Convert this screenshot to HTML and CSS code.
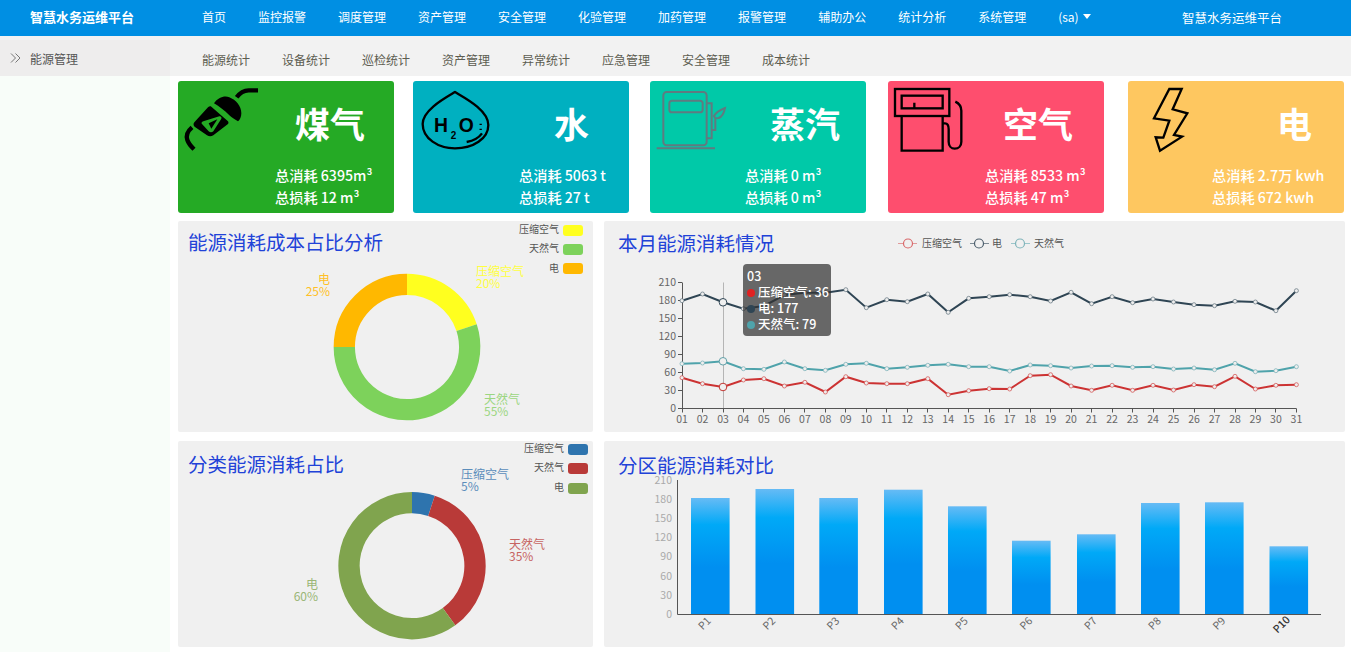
FILE: index.html
```html
<!DOCTYPE html>
<html lang="zh-CN">
<head>
<meta charset="utf-8">
<title>智慧水务运维平台</title>
<link rel="stylesheet" href="styles.css">
</head>
<body>
<header class="topbar">
  <div class="brand">智慧水务运维平台</div>
  <nav class="menu">
    <a>首页</a><a>监控报警</a><a>调度管理</a><a>资产管理</a><a>安全管理</a><a>化验管理</a><a>加药管理</a><a>报警管理</a><a>辅助办公</a><a>统计分析</a><a>系统管理</a><a class="user">(sa)<i class="caret"></i></a>
  </nav>
  <div class="brand-right">智慧水务运维平台</div>
</header>
<div class="layout">
  <aside class="sidebar">
    <div class="side-wrap">
      <div class="side-head">
        <svg class="chev" width="12" height="12" viewBox="0 0 12 12"><path d="M1 1.500l4.500 4.500L1 10.500M5.500 1.500L10 6l-4.500 4.500"/></svg>
        <span>能源管理</span>
      </div>
    </div>
  </aside>
  <main class="main">
    <nav class="subnav"><a>能源统计</a><a>设备统计</a><a>巡检统计</a><a>资产管理</a><a>异常统计</a><a>应急管理</a><a>安全管理</a><a>成本统计</a></nav>
    <section class="cards">
      <article class="card coal">
        <svg class="icon" viewBox="0 3 240 240">
          <path class="ink-line thick" d="M246 31H212C196 31 186 38 176 52"/>
          <path class="ink-fill" d="M108 70C120 52 140 46 154 52C174 60 190 78 190 100C190 110 186 120 180 124C170 118 160 112 154 106C140 92 124 80 108 70Z"/>
          <path class="ink-fill" fill-rule="evenodd" d="M100 80L150 124C152 127 152 131 149 133L106 166C100 170 93 170 87 166L52 142C46 138 45 132 49 127L90 82C93 79 97 78 100 80ZM72 132L92 154C96 158 102 158 106 154L130 116C132 112 128 108 124 109L76 124C71 126 69 129 72 132Z"/>
          <path class="ink-fill" d="M92 130L118 118L100 146Z"/>
          <path class="ink-line thick" d="M42 142C28 154 24 168 28 180C32 192 40 200 48 208"/>
        </svg>
        <h3>煤气</h3>
        <p>总消耗 6395m³</p>
        <p>总损耗 12 m³</p>
      </article>
      <article class="card water">
        <svg class="icon" viewBox="9 3 240 240">
          <path class="ink-line" d="M135 36C105 54 38 90 38 132C38 176 85 205 135 205C190 205 235 176 235 135C235 90 165 54 135 36Z"/>
          <text class="h2o" x="72" y="156">H</text>
          <text class="h2o small" x="122" y="176">2</text>
          <text class="h2o" x="146" y="156">O</text>
          <path class="ink-line" d="M170 186C190 182 206 174 216 160M212 131v4M212 146v4"/>
        </svg>
        <h3>水</h3>
        <p>总消耗 5063 t</p>
        <p>总损耗 27 t</p>
      </article>
      <article class="card steam">
        <svg class="icon" viewBox="720 3 240 240">
          <rect class="gray-line" x="760" y="36" width="130" height="160" rx="10"/>
          <rect class="gray-line" x="778" y="62" width="100" height="35" rx="8"/>
          <path class="gray-line" d="M740 205H915M890 70H905V175H890M905 150H916V115L912 108C918 96 930 90 945 84C942 100 936 110 926 114L916 115"/>
        </svg>
        <h3>蒸汽</h3>
        <p>总消耗 0 m³</p>
        <p>总损耗 0 m³</p>
      </article>
      <article class="card air">
        <svg class="icon" viewBox="24 3 240 240">
          <rect class="ink-line" x="45" y="27" width="163" height="81"/>
          <rect class="ink-line" x="65" y="47" width="123" height="38"/>
          <path class="ink-line" d="M103 68V85M65 108V212H188V108M188 130H195C204 130 206 138 206 148V185C206 198 214 206 224 206C236 206 244 198 244 185V92C244 80 236 70 226 65"/>
        </svg>
        <h3>空气</h3>
        <p>总消耗 8533 m³</p>
        <p>总损耗 47 m³</p>
      </article>
      <article class="card power">
        <svg class="icon" viewBox="744 3 240 240">
          <path class="ink-line" d="M868 27H905L878 88L922 100L882 165L906 170L840 212L827 172L850 173L868 122L822 115Z"/>
        </svg>
        <h3>电</h3>
        <p>总消耗 2.7万 kwh</p>
        <p>总损耗 672 kwh</p>
      </article>
    </section>

    <section class="panels">
      <article class="panel">
        <h2>能源消耗成本占比分析</h2>
        <svg class="chart" width="415" height="211" viewBox="0 0 415 211">
          <g class="donut">
            <path class="s-yellow" d="M229 63.300A62.700 62.700 0 0 1 288.630 106.620"/>
            <path class="s-green" d="M288.630 106.620A62.700 62.700 0 1 1 166.300 126"/>
            <path class="s-orange" d="M166.300 126A62.700 62.700 0 0 1 229 63.300"/>
          </g>
          <text class="pie-label t-yellow" x="298" y="55">压缩空气</text>
          <text class="pie-label t-yellow" x="298" y="67">20%</text>
          <text class="pie-label t-orange end" x="152" y="63">电</text>
          <text class="pie-label t-orange end" x="152" y="75">25%</text>
          <text class="pie-label t-green" x="306" y="183">天然气</text>
          <text class="pie-label t-green" x="306" y="195">55%</text>
          <text class="legend end" x="381" y="12">压缩空气</text>
          <rect class="f-yellow" x="385" y="4" width="20" height="11" rx="3"/>
          <text class="legend end" x="381" y="31">天然气</text>
          <rect class="f-green" x="385" y="23" width="20" height="11" rx="3"/>
          <text class="legend end" x="381" y="51">电</text>
          <rect class="f-orange" x="385" y="42" width="20" height="11" rx="3"/>
        </svg>
      </article>

      <article class="panel">
        <h2>本月能源消耗情况</h2>
        <svg class="chart" width="741" height="211" viewBox="0 0 741 211">
          <defs>
            <marker id="dot-air" markerWidth="6" markerHeight="6" refX="3" refY="3" markerUnits="userSpaceOnUse"><circle class="mk-air" cx="3" cy="3" r="2"/></marker>
            <marker id="dot-elec" markerWidth="6" markerHeight="6" refX="3" refY="3" markerUnits="userSpaceOnUse"><circle class="mk-elec" cx="3" cy="3" r="2"/></marker>
            <marker id="dot-gas" markerWidth="6" markerHeight="6" refX="3" refY="3" markerUnits="userSpaceOnUse"><circle class="mk-gas" cx="3" cy="3" r="2"/></marker>
          </defs>
          <path class="lg-air" d="M294 22.500H313"/><circle class="lc-air" cx="304" cy="22.500" r="4.500"/>
          <text class="legend" x="318" y="26">压缩空气</text>
          <path class="lg-elec" d="M366 22.500H385"/><circle class="lc-elec" cx="375" cy="22.500" r="4.500"/>
          <text class="legend" x="388" y="26">电</text>
          <path class="lg-gas" d="M407 22.500H426"/><circle class="lc-gas" cx="416" cy="22.500" r="4.500"/>
          <text class="legend" x="430" y="26">天然气</text>

          <path class="pointer" d="M119.500 61.500V187.500"/>
          <path class="axis" d="M78.500 61.500V187.500M74 61.500H78M74 79.500H78M74 97.500H78M74 115.500H78M74 133.500H78M74 151.500H78M74 169.500H78M74 187.500H692.400"/>
          <path class="axis" d="M78.500 187.500v4M98.500 187.500v4M119.500 187.500v4M139.500 187.500v4M159.500 187.500v4M180.500 187.500v4M200.500 187.500v4M221.500 187.500v4M241.500 187.500v4M262.500 187.500v4M282.500 187.500v4M303.500 187.500v4M323.500 187.500v4M344.500 187.500v4M364.500 187.500v4M385.500 187.500v4M405.500 187.500v4M426.500 187.500v4M446.500 187.500v4M467.500 187.500v4M487.500 187.500v4M508.500 187.500v4M528.500 187.500v4M549.500 187.500v4M569.500 187.500v4M590.500 187.500v4M610.500 187.500v4M631.500 187.500v4M651.500 187.500v4M671.500 187.500v4M692.500 187.500v4"/>
          <g class="tick end">
            <text x="72" y="65">210</text><text x="72" y="83">180</text><text x="72" y="101">150</text><text x="72" y="119">120</text><text x="72" y="137">90</text><text x="72" y="155">60</text><text x="72" y="173">30</text><text x="72" y="191">0</text>
          </g>
          <g class="tick mid">
            <text x="78" y="202">01</text><text x="98.500" y="202">02</text><text x="119" y="202">03</text><text x="139.400" y="202">04</text><text x="159.900" y="202">05</text><text x="180.400" y="202">06</text><text x="200.900" y="202">07</text><text x="221.400" y="202">08</text><text x="241.800" y="202">09</text><text x="262.300" y="202">10</text><text x="282.800" y="202">11</text><text x="303.300" y="202">12</text><text x="323.800" y="202">13</text><text x="344.200" y="202">14</text><text x="364.700" y="202">15</text><text x="385.200" y="202">16</text><text x="405.700" y="202">17</text><text x="426.200" y="202">18</text><text x="446.600" y="202">19</text><text x="467.100" y="202">20</text><text x="487.600" y="202">21</text><text x="508.100" y="202">22</text><text x="528.600" y="202">23</text><text x="549" y="202">24</text><text x="569.500" y="202">25</text><text x="590" y="202">26</text><text x="610.500" y="202">27</text><text x="631" y="202">28</text><text x="651.400" y="202">29</text><text x="671.900" y="202">30</text><text x="692.400" y="202">31</text>
          </g>
          <polyline class="line-elec" points="78,79.700 98.500,73 119,81.300 139.400,87.700 159.900,85 180.400,74 200.900,71.700 221.400,71.700 241.800,68.700 262.300,86.700 282.800,78.700 303.300,80.700 323.800,73 344.200,91.300 364.700,77.300 385.200,75.700 405.700,73.700 426.200,75.700 446.600,80 467.100,71.300 487.600,82.700 508.100,75.700 528.600,81.700 549,78 569.500,81 590,83.700 610.500,84.700 631,80.300 651.400,81 671.900,89.700 692.400,69.700"/>
          <polyline class="line-gas" points="78,142.700 98.500,142 119,140.300 139.400,147.700 159.900,148.300 180.400,141 200.900,147.700 221.400,149.300 241.800,143.300 262.300,142.300 282.800,147.700 303.300,146.300 323.800,144.300 344.200,143.300 364.700,145.700 385.200,145.700 405.700,150 426.200,144 446.600,144.700 467.100,147 487.600,145 508.100,144.700 528.600,146.300 549,145.700 569.500,148 590,147 610.500,148.700 631,142.300 651.400,150.700 671.900,149.700 692.400,145.700"/>
          <polyline class="line-air" points="78,156.700 98.500,162.700 119,166 139.400,159 159.900,157.700 180.400,165 200.900,161.300 221.400,171 241.800,155.700 262.300,162 282.800,162.700 303.300,162.700 323.800,157.700 344.200,173.700 364.700,169.700 385.200,167.700 405.700,168 426.200,154.700 446.600,153.700 467.100,165 487.600,169.300 508.100,164.300 528.600,169.300 549,164.300 569.500,169 590,163.700 610.500,165.700 631,155.300 651.400,168 671.900,164.300 692.400,163.700"/>
          <circle class="pt-elec" cx="119" cy="81.300" r="3.800"/>
          <circle class="pt-gas" cx="119" cy="140.300" r="3.800"/>
          <circle class="pt-air" cx="119" cy="166" r="3.800"/>
        </svg>
        <div class="tooltip">
          <div>03</div>
          <div><i class="dot d-air"></i>压缩空气: 36</div>
          <div><i class="dot d-elec"></i>电: 177</div>
          <div><i class="dot d-gas"></i>天然气: 79</div>
        </div>
      </article>

      <article class="panel">
        <h2>分类能源消耗占比</h2>
        <svg class="chart" width="415" height="206" viewBox="0 0 415 206">
          <g class="donut">
            <path class="s-blue" d="M234 61.700A63 63 0 0 1 253.470 64.780"/>
            <path class="s-red" d="M253.470 64.780A63 63 0 0 1 271.030 175.670"/>
            <path class="s-olive" d="M271.030 175.670A63 63 0 1 1 234 61.700"/>
          </g>
          <text class="pie-label t-blue" x="283" y="38">压缩空气</text>
          <text class="pie-label t-blue" x="283" y="50">5%</text>
          <text class="pie-label t-red" x="331" y="108">天然气</text>
          <text class="pie-label t-red" x="331" y="120">35%</text>
          <text class="pie-label t-olive end" x="140" y="148">电</text>
          <text class="pie-label t-olive end" x="140" y="160">60%</text>
          <text class="legend end" x="386" y="11">压缩空气</text>
          <rect class="f-blue" x="390" y="3" width="20" height="11" rx="3"/>
          <text class="legend end" x="386" y="30">天然气</text>
          <rect class="f-red" x="390" y="22" width="20" height="11" rx="3"/>
          <text class="legend end" x="386" y="50">电</text>
          <rect class="f-olive" x="390" y="42" width="20" height="11" rx="3"/>
        </svg>
      </article>

      <article class="panel">
        <h2>分区能源消耗对比</h2>
        <svg class="chart" width="741" height="206" viewBox="0 0 741 206">
          <defs>
            <linearGradient id="bar-fill" x1="0" y1="0" x2="0" y2="1">
              <stop offset="0" stop-color="#66bbf5"/>
              <stop offset="0.230" stop-color="#00a9f7"/>
              <stop offset="0.600" stop-color="#008ff0"/>
              <stop offset="1" stop-color="#008ff0"/>
            </linearGradient>
          </defs>
          <g class="bar">
            <rect x="87" y="57" width="38.600" height="116"/>
            <rect x="151.500" y="48" width="38.600" height="125"/>
            <rect x="215.300" y="57" width="38.600" height="116"/>
            <rect x="280" y="48.700" width="38.600" height="124.300"/>
            <rect x="344" y="65.300" width="38.600" height="107.700"/>
            <rect x="408" y="99.700" width="38.600" height="73.300"/>
            <rect x="473" y="93.300" width="38.600" height="79.700"/>
            <rect x="537" y="62" width="38.600" height="111"/>
            <rect x="601" y="61.300" width="38.600" height="111.700"/>
            <rect x="665.500" y="105.300" width="38.600" height="67.700"/>
          </g>
          <path class="axis" d="M73.500 39V173.500H717"/>
          <g class="tick-light end">
            <text x="68" y="43">210</text><text x="68" y="62">180</text><text x="68" y="81">150</text><text x="68" y="100">120</text><text x="68" y="119">90</text><text x="68" y="139">60</text><text x="68" y="158">30</text><text x="68" y="177">0</text>
          </g>
          <g class="tick mid">
            <text x="101" y="186" transform="rotate(-45 101 183)">P1</text>
            <text x="165.500" y="186" transform="rotate(-45 165.500 183)">P2</text>
            <text x="229.500" y="186" transform="rotate(-45 229.500 183)">P3</text>
            <text x="294" y="186" transform="rotate(-45 294 183)">P4</text>
            <text x="358" y="186" transform="rotate(-45 358 183)">P5</text>
            <text x="422.500" y="186" transform="rotate(-45 422.500 183)">P6</text>
            <text x="487" y="186" transform="rotate(-45 487 183)">P7</text>
            <text x="551" y="186" transform="rotate(-45 551 183)">P8</text>
            <text x="615.500" y="186" transform="rotate(-45 615.500 183)">P9</text>
            <text class="strong" x="678" y="187" transform="rotate(-45 678 184)">P10</text>
          </g>
        </svg>
      </article>
    </section>
  </main>
</div>
</body>
</html>
```
FILE: styles.css
```css
* { box-sizing: border-box; }
html, body { margin: 0; height: 100%; }
body {
  font-family: "Noto Sans CJK SC", "Noto Sans", sans-serif;
  background: #fff;
  overflow: hidden;
  color: #555;
}
a { text-decoration: none; color: inherit; }

/* top bar */
.topbar {
  display: flex;
  align-items: center;
  height: 36px;
  background: #008fe3;
  color: #fff;
  font-size: 12px;
}
.brand {
  width: 186px;
  padding: 0 0 3px 30px;
  font-size: 13px;
  font-weight: 700;
}
.menu { display: flex; padding-bottom: 3px; }
.menu a { padding: 0 16px; white-space: nowrap; }
.user { display: flex; align-items: center; }
.caret {
  width: 0;
  height: 0;
  margin-left: 4px;
  border-left: 4.500px solid transparent;
  border-right: 4.500px solid transparent;
  border-top: 5px solid #fff;
}
.brand-right {
  margin-left: auto;
  margin-right: 69px;
  padding-bottom: 2px;
  font-size: 12.500px;
}

/* frame */
.layout { display: flex; height: calc(100% - 36px); }
.sidebar {
  flex: 0 0 170px;
  background: #f8fdf9;
}
.side-wrap {
  padding-top: 4px;
  background: #f3f3f3;
}
.side-head {
  display: flex;
  align-items: center;
  height: 36px;
  padding-left: 10px;
  background: #eeeded;
  font-size: 12px;
  color: #555;
}
.chev { margin-right: 8px; margin-top: 0; }
.chev path { fill: none; stroke: #777; stroke-width: 1; }
.main { flex: 1; min-width: 0; padding-left: 1px; }
.subnav {
  display: flex;
  align-items: center;
  height: 40px;
  padding: 6px 0 0 16px;
  margin-left: -1px;
  background: #f2f2f2;
  font-size: 12px;
  color: #5c5c50;
}
.subnav a { padding: 0 16px; white-space: nowrap; }

/* summary cards */
.cards {
  display: grid;
  grid-template-columns: 235px 237px 238px 240px 216px;
  padding: 5px 0 0 7px;
}
.card {
  position: relative;
  width: 216px;
  height: 132px;
  border-radius: 3px;
  color: #fff;
  padding-top: 22px;
}
.card h3 {
  margin: 0 0 21px;
  font-size: 35px;
  line-height: 40px;
  font-weight: 700;
  padding-left: var(--title-x);
}
.card p {
  margin: 0;
  font-size: 14.200px;
  font-weight: 500;
  line-height: 22px;
  padding-left: var(--text-x);
  white-space: nowrap;
}
.coal { background: #25aa25; --title-x: 117px; --text-x: 97px; }
.water { background: #00b0c0; --title-x: 141px; --text-x: 106px; }
.steam { background: #00c9a8; --title-x: 120px; --text-x: 95px; }
.air { background: #fe4e6e; --title-x: 115px; --text-x: 97px; }
.power { background: #fec760; --title-x: 149px; --text-x: 84px; }
.icon { position: absolute; left: 0; top: 0; width: 80px; height: 80px; }
.ink-line { fill: none; stroke: #000; stroke-width: 7; }
.ink-line.thick { stroke-width: 13; }
.ink-fill { fill: #000; }
.gray-line { fill: none; stroke: #5f7b80; stroke-width: 6; }
.h2o { font-family: "Liberation Sans", sans-serif; font-size: 58px; font-weight: 700; fill: #000; }
.h2o.small { font-size: 30px; }

/* chart panels */
.panels {
  display: grid;
  grid-template-columns: 415px 741px;
  grid-template-rows: 211px 206px;
  column-gap: 11px;
  row-gap: 9px;
  padding: 8px 0 0 7px;
}
.panel {
  position: relative;
  background: #f0f0f0;
  border-radius: 2px;
}
.panel h2 {
  margin: 0;
  padding: 7px 0 0 10px;
  font-size: 19.500px;
  line-height: 28px;
  font-weight: 400;
  color: #2142d8;
}
.panel:nth-child(even) h2 { padding-left: 14px; }
.panel:nth-child(2) h2 { padding-top: 8px; }
.panel:nth-child(3) h2 { padding-top: 9px; }
.panel:nth-child(4) h2 { padding-top: 10px; }
.chart { position: absolute; left: 0; top: 0; }
.donut path { fill: none; stroke-width: 21.300; }
.s-yellow { stroke: #ffff1f; }
.s-green { stroke: #7dd25b; }
.s-orange { stroke: #ffb800; }
.s-blue { stroke: #2e74ae; }
.s-red { stroke: #b93a38; }
.s-olive { stroke: #80a44e; }
.f-yellow { fill: #ffff1f; }
.f-green { fill: #7dd25b; }
.f-orange { fill: #ffb800; }
.f-blue { fill: #2e74ae; }
.f-red { fill: #b93a38; }
.f-olive { fill: #80a44e; }
.pie-label { font-size: 12px; }
.t-yellow { fill: #ffff40; }
.t-green { fill: #9bd680; }
.t-orange { fill: #ffbf26; }
.t-blue { fill: #5b8dbb; }
.t-red { fill: #c76462; }
.t-olive { fill: #9ab676; }
.legend { font-size: 10px; fill: #555; }
.end { text-anchor: end; }
.mid { text-anchor: middle; }
.tick { font-size: 10.500px; fill: #666; }
.tick-light { font-size: 10.500px; fill: #aaa; }
.strong { fill: #333; font-weight: 500; }
.axis { fill: none; stroke: #555; stroke-width: 1; }
.pointer { fill: none; stroke: #b5b5b5; stroke-width: 1; }
.line-air, .line-elec, .line-gas { fill: none; stroke-width: 2; }
.line-air { stroke: #cc3333; marker: url(#dot-air); }
.line-elec { stroke: #2f4554; marker: url(#dot-elec); }
.line-gas { stroke: #4fa3ab; marker: url(#dot-gas); }
.mk-air { fill: #eee; stroke: #d65c5a; stroke-width: 0.800; }
.mk-elec { fill: #eee; stroke: #6d7d88; stroke-width: 0.800; }
.mk-gas { fill: #eee; stroke: #7fb4ba; stroke-width: 0.800; }
.pt-air { fill: #f0f0f0; stroke: #c23531; stroke-width: 1; }
.pt-elec { fill: #f0f0f0; stroke: #2f4554; stroke-width: 1; }
.pt-gas { fill: #f0f0f0; stroke: #61a0a8; stroke-width: 1; }
.lc-air { fill: #f0f0f0; stroke: #d9686a; stroke-width: 1.200; }
.lc-elec { fill: #f0f0f0; stroke: #4a5d6b; stroke-width: 1.200; }
.lc-gas { fill: #f0f0f0; stroke: #7fb4ba; stroke-width: 1.200; }
.lg-air { stroke: #e09a9a; }
.lg-elec { stroke: #7d8b95; }
.lg-gas { stroke: #9cc6cb; }
.bar rect { fill: url(#bar-fill); }

/* tooltip */
.tooltip {
  position: absolute;
  left: 139px;
  top: 43px;
  width: 88px;
  height: 72px;
  padding: 4px 0 0 4px;
  border-radius: 4px;
  background: rgba(50, 50, 50, 0.72);
  color: #fff;
  font-size: 12.500px;
  font-weight: 500;
  line-height: 16px;
  white-space: nowrap;
}
.dot {
  display: inline-block;
  width: 8px;
  height: 8px;
  margin-right: 3px;
  border-radius: 50%;
}
.d-air { background: #e02222; }
.d-elec { background: #2f4554; }
.d-gas { background: #4fa3ab; }
```
